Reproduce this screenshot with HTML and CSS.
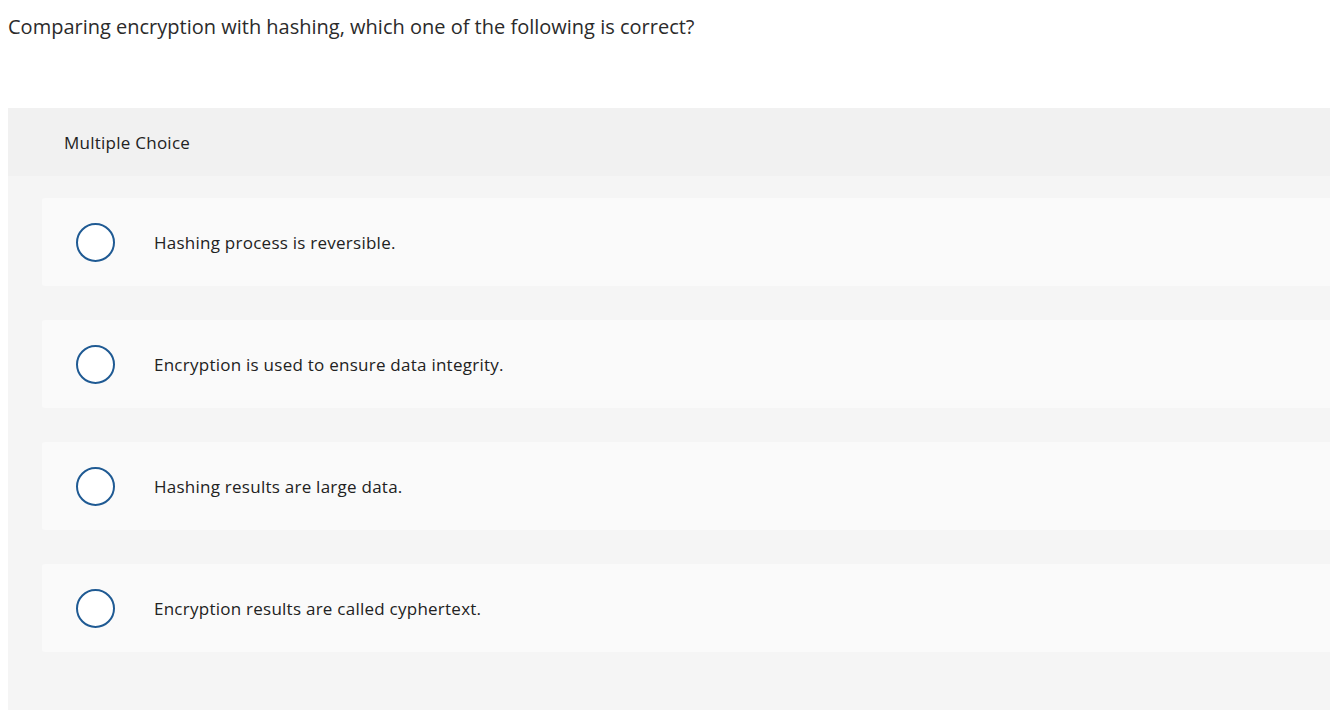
FILE: index.html
```html
<!DOCTYPE html>
<html>
<head>
<meta charset="utf-8">
<link rel="stylesheet" href="styles.css">
</head>
<body>
<div class="question">Comparing encryption with hashing, which one of the following is correct?</div>
<div class="panel">
  <div class="panel-header">Multiple Choice</div>
  <div class="options">
    <div class="option"><span class="radio"></span><span class="label">Hashing process is reversible.</span></div>
    <div class="option"><span class="radio"></span><span class="label">Encryption is used to ensure data integrity.</span></div>
    <div class="option"><span class="radio"></span><span class="label">Hashing results are large data.</span></div>
    <div class="option"><span class="radio"></span><span class="label">Encryption results are called cyphertext.</span></div>
  </div>
</div>
</body>
</html>
```
FILE: styles.css
```css
html, body { margin: 0; padding: 0; background: #fff; }
body {
  padding: 0 0 0 8px;
  font-family: "Open Sans", Lato, sans-serif;
  color: #333;
  overflow: hidden;
}
.question {
  font-size: 20px;
  line-height: 24px;
  padding-top: 15px;
  height: 108px;
  box-sizing: border-box;
  color: #2b2b2b;
}
.panel {
  background: #f5f5f5;
  height: 602px;
}
.panel-header {
  background: #f1f1f1;
  height: 68px;
  display: flex;
  align-items: center;
  padding-left: 56px;
  font-size: 17px;
  letter-spacing: 0.25px;
  color: #222;
}
.options {
  display: flex;
  flex-direction: column;
  gap: 34px;
  padding: 22px 0 0 34px;
}
.option {
  background: #fafafa;
  height: 88px;
  border-radius: 3px 0 0 3px;
  display: flex;
  align-items: center;
  padding-left: 34px;
}
.radio {
  width: 35px;
  height: 35px;
  border: 2px solid #1f5a93;
  border-radius: 50%;
  background: #fff;
  flex: none;
}
.label {
  margin-left: 39px;
  font-size: 17px;
  letter-spacing: 0.25px;
  color: #222;
}
```
